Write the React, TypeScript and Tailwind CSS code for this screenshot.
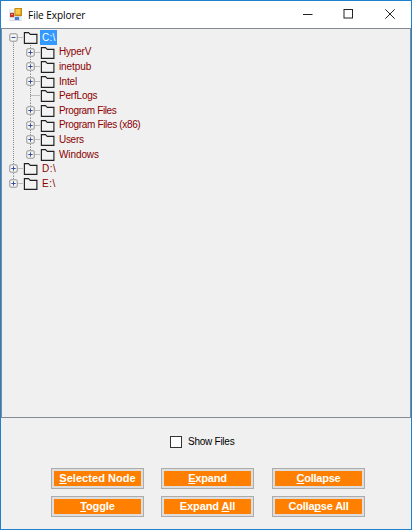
import React from "react";

type Node = { name: string; level: number; state: "open" | "closed" | "leaf"; selected?: boolean; spacing: string };

const nodes: Node[] = [
  { name: "C:\\", level: 0, state: "open", selected: true, spacing: "tracking-[0.2px]" },
  { name: "HyperV", level: 1, state: "closed", spacing: "tracking-[-0.2px]" },
  { name: "inetpub", level: 1, state: "closed", spacing: "tracking-[-0.1px]" },
  { name: "Intel", level: 1, state: "closed", spacing: "tracking-[-0.2px]" },
  { name: "PerfLogs", level: 1, state: "leaf", spacing: "tracking-[-0.2px]" },
  { name: "Program Files", level: 1, state: "closed", spacing: "tracking-[-0.37px]" },
  { name: "Program Files (x86)", level: 1, state: "closed", spacing: "tracking-[-0.34px]" },
  { name: "Users", level: 1, state: "closed", spacing: "tracking-[-0.3px]" },
  { name: "Windows", level: 1, state: "closed", spacing: "tracking-[-0.1px]" },
  { name: "D:\\", level: 0, state: "closed", spacing: "tracking-[0.5px]" },
  { name: "E:\\", level: 0, state: "closed", spacing: "tracking-[0.5px]" },
];

function Glyphs({ node, first, last, lastChild }: { node: Node; first: boolean; last: boolean; lastChild: boolean }) {
  const child = node.level === 1;
  const cx = child ? 28.5 : 11.5;
  const dots = { stroke: "#8c8c8c", strokeDasharray: "1 1", strokeWidth: 1 };
  return (
    <svg className={child ? "h-[14.6px] w-[54px] shrink-0 overflow-visible" : "h-[14.6px] w-[37px] shrink-0 overflow-visible"} fill="none">
      <path d={`M11.5 ${first ? 7.5 : 0}V${last ? 7.5 : 14.6}`} {...dots} />
      {child && <path d={`M28.5 0V${lastChild ? 7.5 : 14.6}`} {...dots} />}
      {node.state === "open" && <path d="M28.5 13V15" {...dots} />}
      <path d={`M${cx} 7.5H${cx + 10}`} {...dots} />
      {node.state !== "leaf" && (
        <g>
          <rect x={cx - 3.7} y="3.8" width="7.4" height="7.4" rx="1" fill="#f7f7f7" stroke="#929292" />
          <path d={node.state === "open" ? `M${cx - 2} 7.5h4` : `M${cx - 2.2} 7.5h4.4M${cx} 5.3v4.4`} stroke="#38509b" />
        </g>
      )}
      <path
        d={`M${cx + 10.9} 13.3V2.6H${cx + 15}L${cx + 16.8} 4.3H${cx + 23.4}V13.3Z`}
        fill="#f3f3f3"
        stroke="#202020"
        strokeWidth="1.15"
      />
    </svg>
  );
}

function ActionButton({ before, mnemonic, after, spacing }: { before?: string; mnemonic: string; after: string; spacing: string }) {
  return (
    <button className="h-[21px] w-[93px] border border-[#acacac] bg-[#dedede] p-[2px]">
      <span className={`flex h-full items-center justify-center whitespace-pre bg-[#ff8000] text-[11px] leading-[15px] font-bold text-white ${spacing}`}>
        <span>{before}<span className="underline decoration-1 underline-offset-[1px] [text-decoration-skip-ink:none]">{mnemonic}</span>{after}</span>
      </span>
    </button>
  );
}

export default function App() {
  return (
    <div className="flex h-[530px] w-[412px] flex-col border border-[#2080cc] bg-[#f0f0f0] font-['Liberation_Sans',Arial,sans-serif]">
      <header className="flex h-[27px] shrink-0 items-center bg-white pl-[8px]">
        <svg width="13" height="13" viewBox="0 0 13 13" className="shrink-0">
          <rect x="0.5" y="1" width="12" height="12" fill="#d3d7de" />
          <rect x="1" y="1" width="4" height="3" fill="#edf0f4" />
          <rect x="1" y="5" width="4" height="4" fill="#c93328" />
          <rect x="2" y="6" width="2" height="1" fill="#e98c78" />
          <rect x="1" y="10" width="4" height="2" fill="#f1f3f6" />
          <rect x="5.5" y="0" width="7.5" height="8" fill="#c98a12" />
          <rect x="6.5" y="1" width="5" height="5.5" fill="#f9c944" />
          <rect x="6" y="9" width="4" height="3" fill="#477fd8" />
          <rect x="10.5" y="9" width="1.5" height="3" fill="#f1f3f6" />
        </svg>
        <h1 className="ml-[6px] flex-1 font-['Open_Sans','Noto_Sans',sans-serif] text-[10px] leading-[14px] tracking-[-0.03px] text-black">File Explorer</h1>
        <svg width="109" height="27" fill="none" stroke="#222" className="shrink-0">
          <path d="M1 13.5h9.5" />
          <rect x="42" y="8.5" width="8.5" height="8.5" />
          <path d="M83.3 8.3l9.4 9.4M92.7 8.3l-9.4 9.4" />
        </svg>
      </header>
      <main className="flex h-[390px] shrink-0 flex-col border border-[#868a94] pt-[1px]">
        {nodes.map((node, i) => (
          <div key={node.name} className="flex h-[14.6px] shrink-0 items-center">
            <Glyphs node={node} first={i === 0} last={i === nodes.length - 1} lastChild={i === 8} />
            <span
              className={`ml-[1px] flex h-[15px] items-center whitespace-pre px-[2px] pt-[1px] text-[10px] leading-[14px] ${node.spacing} ${node.selected ? "bg-[#3399ff] text-white" : "text-[#8b0000]"}`}
            >
              {node.name}
            </span>
          </div>
        ))}
      </main>
      <label className="mt-[16px] ml-[169px] flex h-[15px] w-[80px] items-center gap-[6px] whitespace-nowrap text-[10px] leading-[15px] tracking-[-0.25px] text-black">
        <span className="size-[12px] shrink-0 border border-[#333] bg-white" />
        Show Files
      </label>
      <footer className="mt-[19px] ml-[50px] grid grid-cols-[110px_111px_93px] gap-y-[7px]">
        <ActionButton mnemonic="S" after="elected Node" spacing="tracking-[0.05px]" />
        <ActionButton mnemonic="E" after="xpand" spacing="tracking-[-0.2px]" />
        <ActionButton mnemonic="C" after="ollapse" spacing="tracking-[-0.25px]" />
        <ActionButton mnemonic="T" after="oggle" spacing="tracking-[-0.1px]" />
        <ActionButton before="Expand " mnemonic="A" after="ll" spacing="tracking-[-0.1px]" />
        <ActionButton before="Colla" mnemonic="p" after="se All" spacing="tracking-[-0.2px]" />
      </footer>
    </div>
  );
}
